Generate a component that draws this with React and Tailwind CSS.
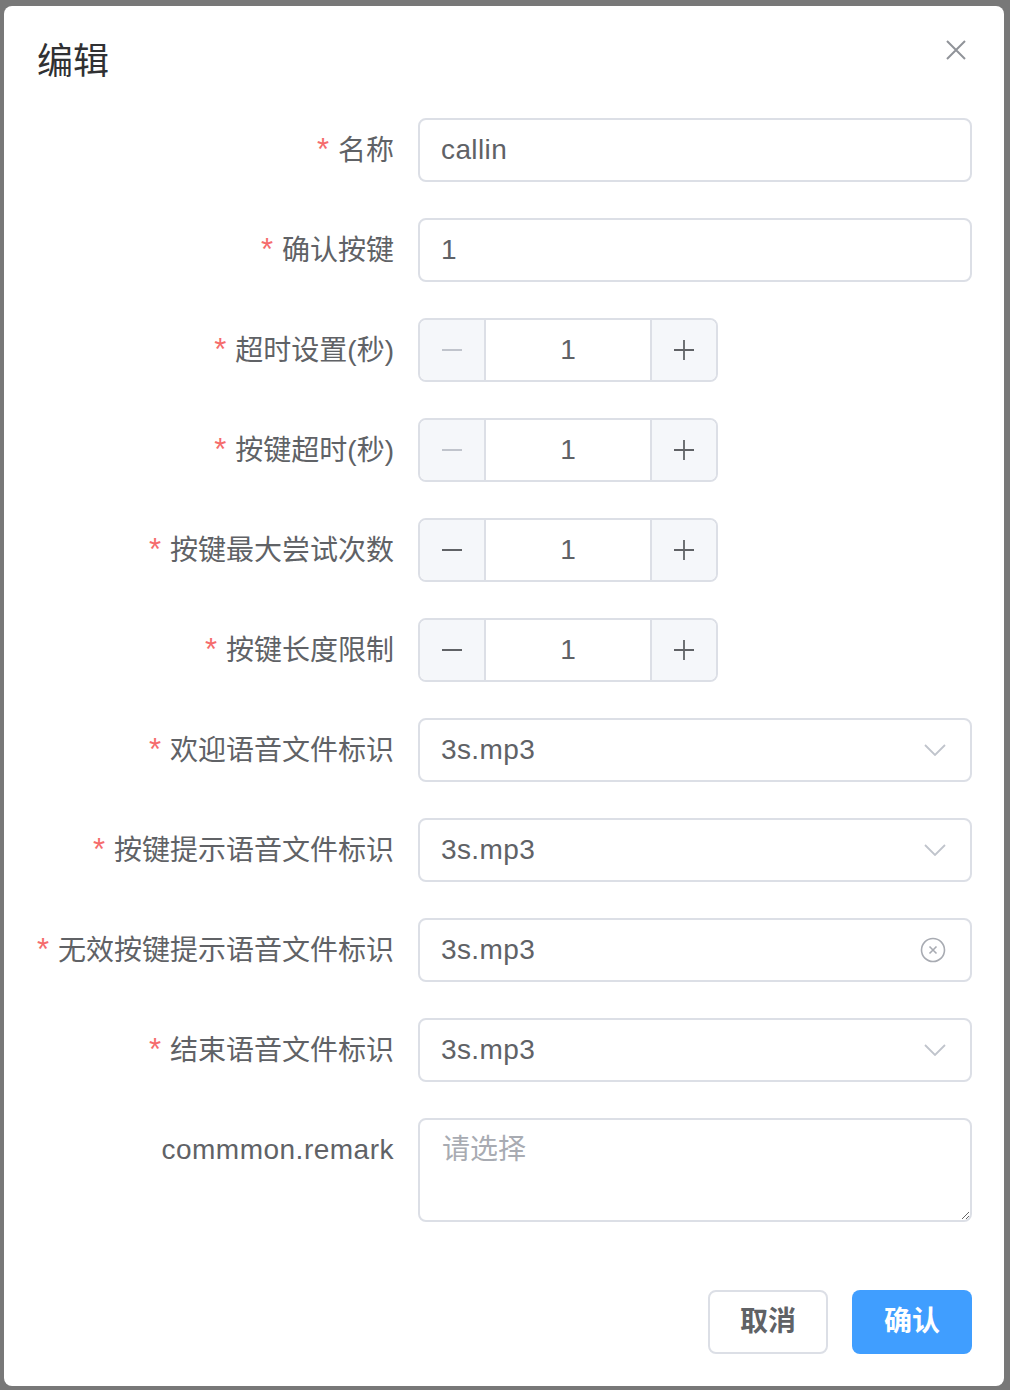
import React from "react";

const FONT = { fontFamily: '"Liberation Sans", "Noto Sans CJK SC", sans-serif' };

const rows = [
  { label: "名称", type: "input", value: "callin" },
  { label: "确认按键", type: "input", value: "1" },
  { label: "超时设置(秒)", type: "number", value: "1", min: true },
  { label: "按键超时(秒)", type: "number", value: "1", min: true },
  { label: "按键最大尝试次数", type: "number", value: "1" },
  { label: "按键长度限制", type: "number", value: "1" },
  { label: "欢迎语音文件标识", type: "select", value: "3s.mp3" },
  { label: "按键提示语音文件标识", type: "select", value: "3s.mp3" },
  { label: "无效按键提示语音文件标识", type: "select", value: "3s.mp3", clear: true },
  { label: "结束语音文件标识", type: "select", value: "3s.mp3" },
];

const ChevronDown = () => (
  <svg width="22" height="12" viewBox="0 0 22 12" fill="none">
    <path d="M1 1l10 10L21 1" stroke="#c0c4cc" strokeWidth="1.8" />
  </svg>
);

const ClearIcon = () => (
  <svg width="26" height="26" viewBox="0 0 26 26" fill="none">
    <circle cx="13" cy="13" r="11.5" stroke="#a8abb2" strokeWidth="1.6" />
    <path d="M9.5 9.5l7 7M16.5 9.5l-7 7" stroke="#a8abb2" strokeWidth="1.6" />
  </svg>
);

const Minus = ({ color }) => (
  <svg width="22" height="22" viewBox="0 0 22 22" fill="none">
    <path d="M1 11h20" stroke={color} strokeWidth="1.8" />
  </svg>
);

const Plus = () => (
  <svg width="22" height="22" viewBox="0 0 22 22" fill="none">
    <path d="M1 11h20M11 1v20" stroke="#606266" strokeWidth="1.8" />
  </svg>
);

function Field({ row }) {
  if (row.type === "number") {
    return (
      <div className="flex h-[64px] w-[300px] rounded-[8px] border-2 border-[#dcdfe6] overflow-hidden">
        <div className="flex w-[66px] items-center justify-center bg-[#f5f7fa] border-r-2 border-[#dcdfe6]">
          <Minus color={row.min ? "#c0c4cc" : "#606266"} />
        </div>
        <div className="flex flex-1 items-center justify-center text-[28px] text-[#606266]">
          {row.value}
        </div>
        <div className="flex w-[66px] items-center justify-center bg-[#f5f7fa] border-l-2 border-[#dcdfe6]">
          <Plus />
        </div>
      </div>
    );
  }
  return (
    <div className="flex h-[64px] flex-1 items-center justify-between rounded-[8px] border-2 border-[#dcdfe6] pl-[21px] pr-[24px] text-[28px] text-[#606266]">
      <span className="tracking-[0.4px]">{row.value}</span>
      {row.type === "select" && (row.clear ? <ClearIcon /> : <ChevronDown />)}
    </div>
  );
}

export default function App() {
  return (
    <div className="min-h-[1390px] w-[1010px] bg-[#787878] pt-[6px] pl-[4px]" style={FONT}>
      <div className="relative w-[1000px] h-[1380px] rounded-[8px] bg-white px-[32px] pt-[34px] pb-[32px] flex flex-col">
        <div className="text-[36px] leading-[44px] text-[#303133] pl-[1px]">编辑</div>
        <button className="absolute right-[32px] top-[28px] p-[4px]">
          <svg width="24" height="24" viewBox="0 0 24 24" fill="none">
            <path d="M3 3l18 18M21 3L3 21" stroke="#909399" strokeWidth="2" />
          </svg>
        </button>

        <div className="mt-[34px] flex flex-col gap-[36px]">
          {rows.map((row) => (
            <div key={row.label} className="flex items-center">
              <div className="w-[382px] shrink-0 pr-[24px] text-right text-[28px] text-[#606266] whitespace-nowrap">
                <span className="text-[#f56c6c] text-[31px] mr-[9px]">*</span>
                {row.label}
              </div>
              <Field row={row} />
            </div>
          ))}
          <div className="flex items-start">
            <div className="w-[382px] shrink-0 pr-[24px] pt-[11px] text-right text-[28px] leading-[42px] text-[#606266] tracking-[0.5px]">
              commmon.remark
            </div>
            <textarea
              placeholder="请选择"
              className="h-[104px] flex-1 rounded-[8px] border-2 border-[#dcdfe6] px-[22px] py-[9px] text-[28px] leading-[42px] text-[#606266] placeholder:text-[#a8abb2] outline-none"
              style={FONT}
            />
          </div>
        </div>

        <div className="mt-auto flex justify-end gap-[24px]">
          <button className="h-[64px] w-[120px] rounded-[8px] border-2 border-[#dcdfe6] bg-white text-[28px] font-bold text-[#606266]">
            取消
          </button>
          <button className="h-[64px] w-[120px] rounded-[8px] bg-[#409eff] text-[28px] font-bold text-white">
            确认
          </button>
        </div>
      </div>
    </div>
  );
}
